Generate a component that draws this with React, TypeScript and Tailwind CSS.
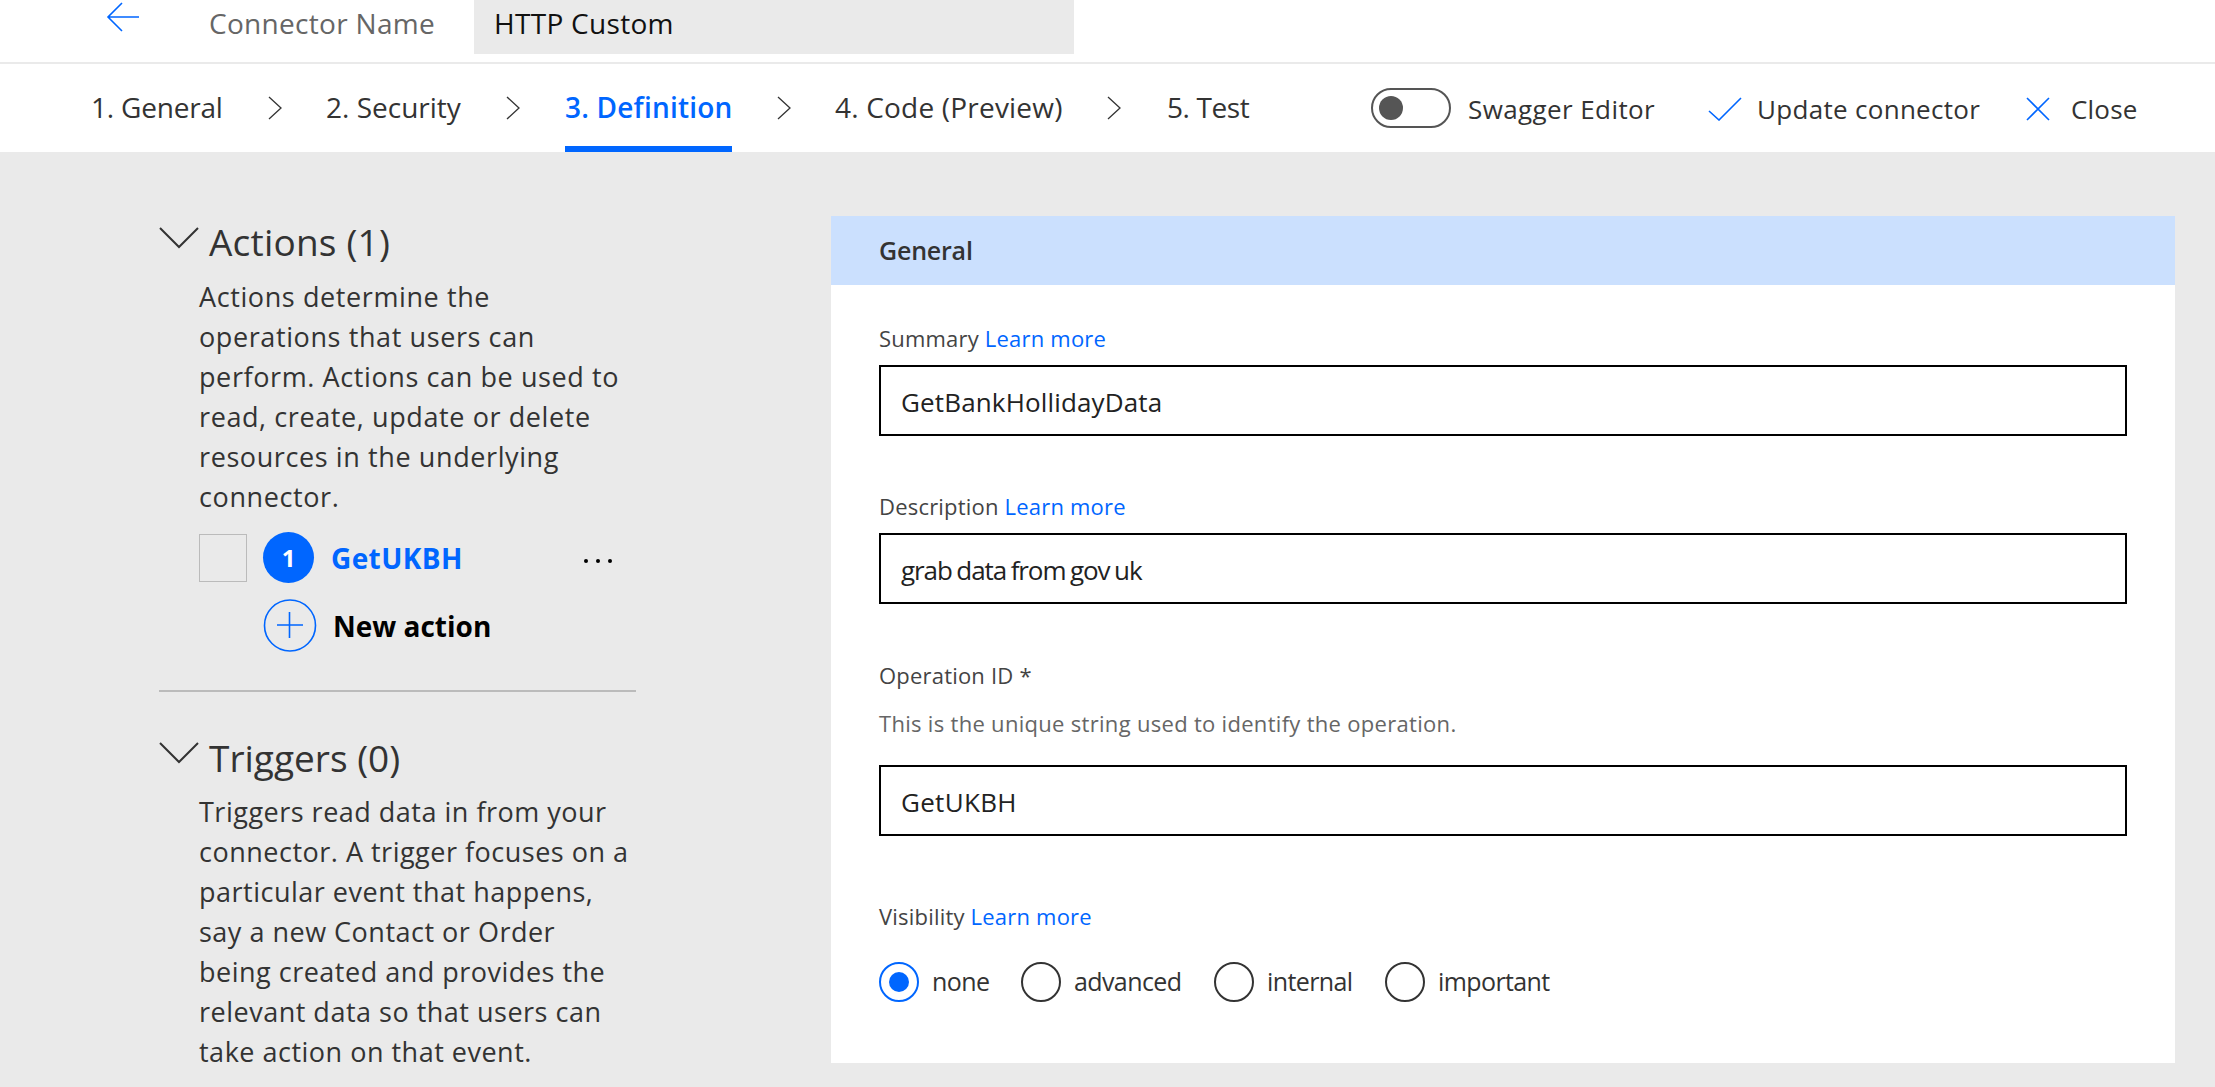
import React from 'react';

const font = { fontFamily: '"Open Sans", "Noto Sans", sans-serif' };

function Chevron() {
  return (
    <svg width="16" height="24" viewBox="0 0 16 24" fill="none" stroke="#333" strokeWidth="1.3" className="shrink-0 -ml-[1px] mr-[1px]">
      <path d="M2 1 L14 12 L2 23" />
    </svg>
  );
}

function ChevronDown() {
  return (
    <svg width="40" height="22" viewBox="0 0 40 22" fill="none" stroke="#333" strokeWidth="2" className="shrink-0">
      <path d="M1 1 L20 20 L39 1" />
    </svg>
  );
}

function Radio({ label, checked, className }: { label: string; checked?: boolean; className: string }) {
  return (
    <div className={`flex items-center ${className}`}>
      <div
        className={`w-[40px] h-[40px] rounded-full border-2 flex items-center justify-center shrink-0 ${
          checked ? 'border-[#0066ff]' : 'border-[#333]'
        }`}
      >
        {checked && <div className="w-[20px] h-[20px] rounded-full bg-[#0066ff]" />}
      </div>
      <span className="ml-[13px] text-[25px] text-[#333] tracking-[-0.6px]">{label}</span>
    </div>
  );
}

function Field({ label, link, help, value, valueClass, className }: { label: string; link?: boolean; help?: string; value: string; valueClass: string; className: string }) {
  return (
    <div className={className}>
      <div className="h-[30px] leading-[30px] text-[22px] text-[#444] tracking-[0.2px]">
        {label} {link && <span className="text-[#0066ff]">Learn more</span>}
      </div>
      {help && <div className="mt-[18px] h-[30px] leading-[30px] text-[22px] text-[#666] tracking-[0.3px]">{help}</div>}
      <div className={`${help ? 'mt-[27px]' : 'mt-[12px]'} h-[71px] border-2 border-black flex items-center pl-[20px] pt-[3px] text-[26px] text-[#222] ${valueClass}`}>
        {value}
      </div>
    </div>
  );
}

export default function App() {
  return (
    <div style={font} className="w-[2215px] h-[1087px] overflow-hidden bg-[#eaeaea]">
      {/* connector name bar */}
      <div className="h-[64px] bg-white border-b-2 border-[#eaeaea] flex items-start pl-[106px]">
        <svg width="34" height="30" viewBox="0 0 34 30" fill="none" stroke="#0066ff" strokeWidth="1.6" className="mt-[2px] shrink-0">
          <path d="M16 1 L2 15 L16 29 M2 15 H33" />
        </svg>
        <div className="ml-[69px] w-[265px] h-[54px] leading-[46px] text-[28px] text-[#666] tracking-[0.3px]">Connector Name</div>
        <div className="w-[600px] h-[54px] bg-[#eaeaea] pl-[20px] leading-[46px] text-[28px] text-[#111] tracking-[0.3px]">HTTP Custom</div>
      </div>

      {/* wizard tabs */}
      <div className="h-[88px] bg-white flex items-start pl-[91px] text-[28px] text-[#333] leading-[38px]">
        <div className="w-[177px] h-[88px] flex items-center pb-[2px] tracking-[-0.2px]">1. General</div>
        <div className="h-[88px] flex items-center"><Chevron /></div>
        <div className="ml-[42px] w-[180px] h-[88px] flex items-center pb-[2px]">2. Security</div>
        <div className="h-[88px] flex items-center"><Chevron /></div>
        <div className="ml-[43px] w-[167px] h-[88px] flex items-center font-semibold text-[#0066ff] border-b-[6px] border-[#0066ff] pt-[4px] whitespace-nowrap tracking-[0.2px]">3. Definition</div>
        <div className="ml-[45px] h-[88px] flex items-center"><Chevron /></div>
        <div className="ml-[42px] w-[272px] h-[88px] flex items-center pb-[2px] tracking-[0.2px]">4. Code (Preview)</div>
        <div className="h-[88px] flex items-center"><Chevron /></div>
        <div className="ml-[44px] w-[204px] h-[88px] flex items-center pb-[2px] tracking-[-0.4px]">5. Test</div>
        <div className="h-[88px] flex items-center">
          <div className="w-[80px] h-[40px] rounded-full border-2 border-[#555] flex items-center pl-[6px]">
            <div className="w-[24px] h-[24px] rounded-full bg-[#555]" />
          </div>
        </div>
        <div className="ml-[17px] w-[240px] h-[88px] flex items-center text-[26px] tracking-[0.4px] pt-[2px]">Swagger Editor</div>
        <div className="h-[88px] flex items-center pt-[2px]">
          <svg width="34" height="24" viewBox="0 0 34 24" fill="none" stroke="#0066ff" strokeWidth="1.6" className="shrink-0">
            <path d="M1 14 L11 23 L33 1" />
          </svg>
        </div>
        <div className="ml-[15px] w-[269px] h-[88px] flex items-center text-[26px] tracking-[0.3px] pt-[2px]">Update connector</div>
        <div className="h-[88px] flex items-center pt-[2px]">
          <svg width="24" height="24" viewBox="0 0 24 24" fill="none" stroke="#0066ff" strokeWidth="1.6" className="shrink-0">
            <path d="M1 1 L23 23 M23 1 L1 23" />
          </svg>
        </div>
        <div className="ml-[21px] h-[88px] flex items-center text-[26px] tracking-[0.2px] pt-[2px]">Close</div>
      </div>

      <div className="flex items-start">
        {/* actions / triggers list */}
        <div className="w-[831px] pl-[159px] pt-[66px] shrink-0">
          <div className="flex items-start h-[48px]">
            <div className="mt-[9px]"><ChevronDown /></div>
            <div className="ml-[10px] text-[37px] leading-[48px] text-[#333] tracking-[0.2px]">Actions (1)</div>
          </div>
          <div className="mt-[11px] ml-[40px] text-[27px] leading-[40px] text-[#333] whitespace-nowrap tracking-[0.6px]">
            Actions determine the<br />
            operations that users can<br />
            perform. Actions can be used to<br />
            read, create, update or delete<br />
            resources in the underlying<br />
            connector.
          </div>
          <div className="mt-[15px] ml-[40px] flex items-center h-[51px] w-[413px]">
            <div className="w-[48px] h-[48px] border border-[#bbb] shrink-0" />
            <div className="ml-[16px] w-[51px] h-[51px] rounded-full bg-[#0066ff] text-white flex items-center justify-center text-[24px] font-bold shrink-0">1</div>
            <div className="ml-[17px] text-[28px] font-bold text-[#0066ff] tracking-[0.4px]">GetUKBH</div>
            <div className="ml-auto flex gap-[8px] mt-[6px]">
              <div className="w-[4px] h-[4px] rounded-full bg-black" />
              <div className="w-[4px] h-[4px] rounded-full bg-black" />
              <div className="w-[4px] h-[4px] rounded-full bg-black" />
            </div>
          </div>
          <div className="mt-[16px] ml-[104px] flex items-center h-[53px]">
            <svg width="54" height="53" viewBox="0 0 54 53" fill="none" stroke="#0066ff" strokeWidth="1.6" className="shrink-0">
              <circle cx="27" cy="26.5" r="25.5" />
              <path d="M14 26 H40 M26.5 13 V39" />
            </svg>
            <div className="ml-[16px] text-[28px] font-bold text-black">New action</div>
          </div>
          <div className="mt-[38px] w-[477px] h-[2px] bg-[#bbb]" />
          <div className="mt-[42px] flex items-start h-[48px]">
            <div className="mt-[8px]"><ChevronDown /></div>
            <div className="ml-[10px] text-[37px] leading-[48px] text-[#333]">Triggers (0)</div>
          </div>
          <div className="mt-[10px] ml-[40px] text-[27px] leading-[40px] text-[#333] whitespace-nowrap tracking-[0.5px]">
            Triggers read data in from your<br />
            connector. A trigger focuses on a<br />
            particular event that happens,<br />
            say a new Contact or Order<br />
            being created and provides the<br />
            relevant data so that users can<br />
            take action on that event.
          </div>
        </div>

        {/* operation form */}
        <div className="mt-[64px] w-[1344px] shrink-0 bg-white">
          <div className="h-[69px] bg-[#cbe0fe] pl-[48px] flex items-center text-[25px] font-semibold text-[#333] tracking-[-0.2px]">General</div>
          <div className="px-[48px] pt-[38px] h-[778px]">
            <Field label="Summary" link value="GetBankHollidayData" valueClass="tracking-[0.15px]" className="" />
            <Field label="Description" link value="grab data from gov uk" valueClass="tracking-[-1.1px] [word-spacing:-1px]" className="mt-[55px]" />
            <Field label="Operation ID *" help="This is the unique string used to identify the operation." value="GetUKBH" valueClass="tracking-[0.3px]" className="mt-[56px]" />
            <div className="mt-[65px] h-[30px] leading-[30px] text-[22px] text-[#444] tracking-[0.2px]">
              Visibility <span className="text-[#0066ff]">Learn more</span>
            </div>
            <div className="mt-[31px] flex">
              <Radio label="none" checked className="w-[142px]" />
              <Radio label="advanced" className="w-[193px]" />
              <Radio label="internal" className="w-[171px]" />
              <Radio label="important" className="" />
            </div>
          </div>
        </div>
      </div>
    </div>
  );
}
